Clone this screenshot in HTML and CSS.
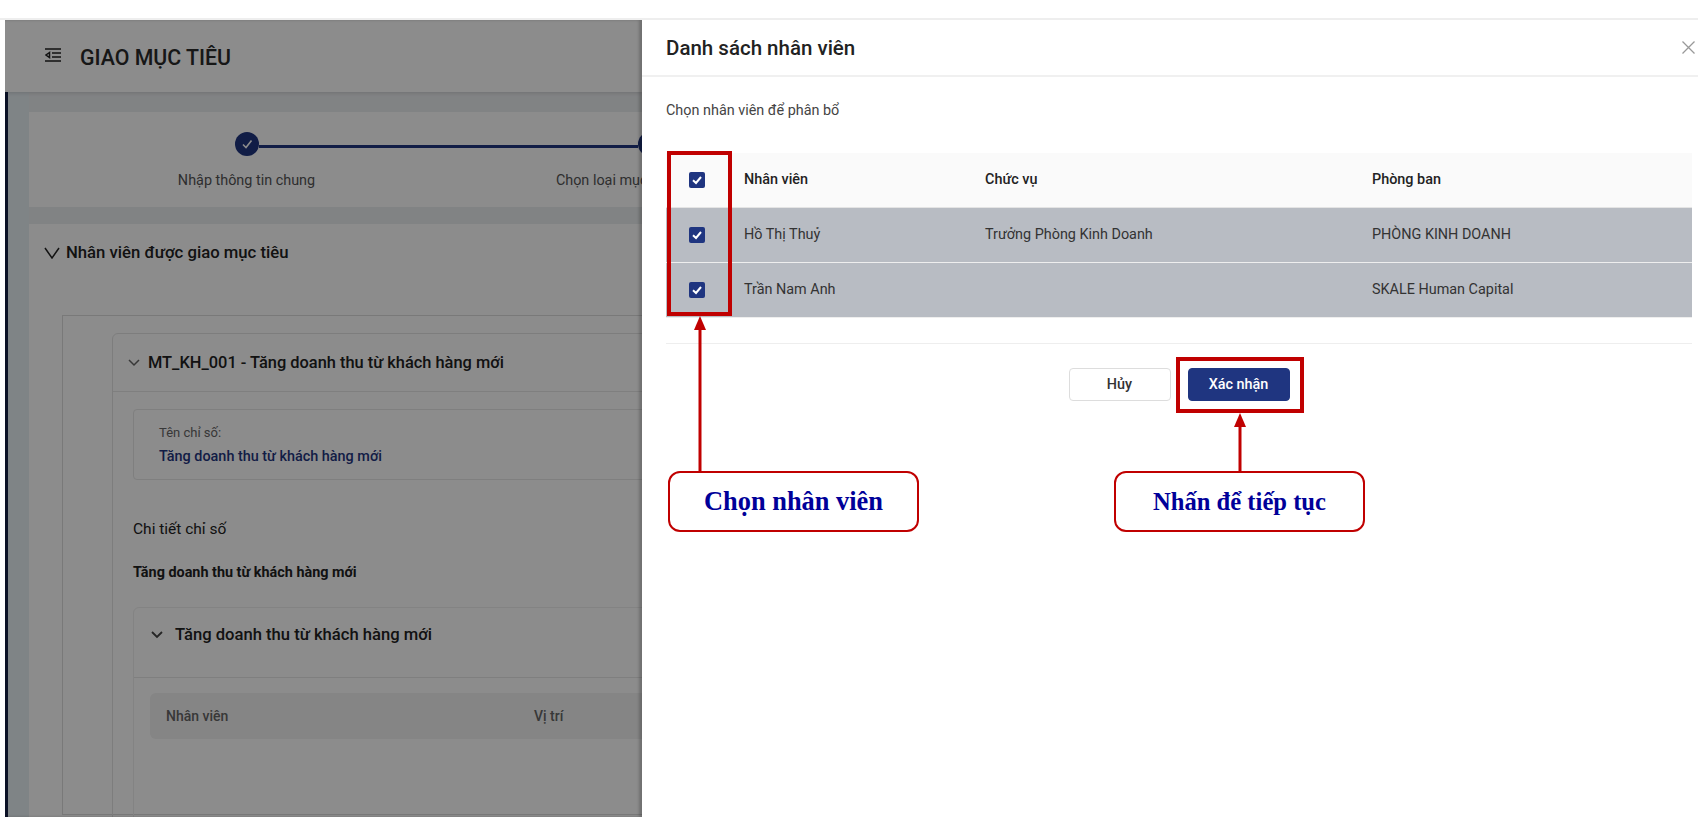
FILE: index.html
```html
<!DOCTYPE html>
<html lang="vi">
<head>
    <meta charset="UTF-8">
    <title>Giao mục tiêu</title>
    <link rel="stylesheet" href="styles.css">
</head>
<body>
    <div class="topbar"></div>
    <div class="screen">
        <div class="page">
            <header class="page-header">
                <svg class="menu-icon" viewBox="0 0 16 14" width="16" height="14">
                    <path d="M0 1h16M7 5h9M7 9h9M0 13h16M4.500 4.500 1 7l3.500 2.500z" fill="none" stroke="#222" stroke-width="1.500"/>
                </svg>
                <h1>GIAO MỤC TIÊU</h1>
            </header>
            <div class="rail">
                <div class="content">
                    <section class="steps">
                        <div class="step-track">
                            <span class="step-dot">
                                <svg viewBox="0 0 12 12" width="12" height="12"><path d="M2 6.500 5 9.500 10.500 2.500" fill="none" stroke="#fff" stroke-width="1.600"/></svg>
                            </span>
                            <span class="step-line"></span>
                            <span class="step-dot"></span>
                        </div>
                        <div class="step-labels">
                            <span>Nhập thông tin chung</span>
                            <span>Chọn loại mục tiêu và chỉ tiêu</span>
                        </div>
                    </section>

                    <section class="assign">
                        <h2 class="assign-title">
                            <svg viewBox="0 0 16 12" width="16" height="12"><path d="M1 1l7 10 7-10" fill="none" stroke="#222" stroke-width="1.500"/></svg>
                            Nhân viên được giao mục tiêu
                        </h2>
                        <div class="assign-box">
                            <div class="goal">
                                <h3 class="goal-head">
                                    <svg viewBox="0 0 12 8" width="12" height="8"><path d="M1 1l5 5 5-5" fill="none" stroke="#666" stroke-width="1.500"/></svg>
                                    MT_KH_001 - Tăng doanh thu từ khách hàng mới
                                </h3>
                                <div class="goal-body">
                                    <div class="metric-name">
                                        <div class="metric-label">Tên chỉ số:</div>
                                        <div class="metric-value">Tăng doanh thu từ khách hàng mới</div>
                                    </div>
                                    <div class="detail-title">Chi tiết chỉ số</div>
                                    <div class="detail-name">Tăng doanh thu từ khách hàng mới</div>
                                    <div class="detail-card">
                                        <h4 class="detail-head">
                                            <svg viewBox="0 0 12 8" width="12" height="8"><path d="M1 1l5 5 5-5" fill="none" stroke="#444" stroke-width="1.800"/></svg>
                                            Tăng doanh thu từ khách hàng mới
                                        </h4>
                                        <div class="detail-table-head">
                                            <span class="col-staff">Nhân viên</span>
                                            <span>Vị trí</span>
                                        </div>
                                    </div>
                                </div>
                            </div>
                        </div>
                    </section>
                </div>
            </div>
        </div>

        <aside class="drawer">
            <div class="drawer-head">
                <h2>Danh sách nhân viên</h2>
                <svg class="close-icon" viewBox="0 0 13 13" width="13" height="13"><path d="M.5.500l12 12M12.500.500l-12 12" fill="none" stroke="#999" stroke-width="1.300"/></svg>
            </div>
            <div class="drawer-body">
                <p class="hint">Chọn nhân viên để phân bổ</p>
                <table class="staff-table">
                    <thead>
                        <tr>
                            <th class="check-cell"><span class="checkbox"><svg viewBox="0 0 16 16" width="16" height="16"><path d="M4 8.300 7 11l5-6" fill="none" stroke="#fff" stroke-width="2"/></svg></span></th>
                            <th class="name-cell">Nhân viên</th>
                            <th class="role-cell">Chức vụ</th>
                            <th>Phòng ban</th>
                        </tr>
                    </thead>
                    <tbody>
                        <tr>
                            <td class="check-cell"><span class="checkbox"><svg viewBox="0 0 16 16" width="16" height="16"><path d="M4 8.300 7 11l5-6" fill="none" stroke="#fff" stroke-width="2"/></svg></span></td>
                            <td>Hồ Thị Thuỷ</td>
                            <td>Trưởng Phòng Kinh Doanh</td>
                            <td>PHÒNG KINH DOANH</td>
                        </tr>
                        <tr>
                            <td class="check-cell"><span class="checkbox"><svg viewBox="0 0 16 16" width="16" height="16"><path d="M4 8.300 7 11l5-6" fill="none" stroke="#fff" stroke-width="2"/></svg></span></td>
                            <td>Trần Nam Anh</td>
                            <td></td>
                            <td>SKALE Human Capital</td>
                        </tr>
                    </tbody>
                </table>
                <div class="drawer-actions">
                    <button class="btn btn-cancel">Hủy</button>
                    <button class="btn btn-ok">Xác nhận</button>
                </div>
            </div>
        </aside>
    </div>

    <!-- annotations drawn on top of the screenshot -->
    <div class="mark mark-check"></div>
    <svg class="arrow arrow-check" viewBox="0 0 14 155" width="14" height="155"><path d="M7 12v143" stroke="#c00000" stroke-width="3"/><path d="M7 0l6 14H1z" fill="#c00000"/></svg>
    <div class="callout callout-check">Chọn nhân viên</div>

    <div class="mark mark-ok"></div>
    <svg class="arrow arrow-ok" viewBox="0 0 14 58" width="14" height="58"><path d="M7 12v46" stroke="#c00000" stroke-width="3"/><path d="M7 0l6 14H1z" fill="#c00000"/></svg>
    <div class="callout callout-ok">Nhấn để tiếp tục</div>
</body>
</html>
```

FILE: styles.css
```css
* {
    box-sizing: border-box;
}

body {
    font-family: Roboto, Arial, sans-serif;
    font-size: 14.4px;
    color: #222;
    background: white;
    height: 817px;
    margin: 0;
    overflow: hidden;
    position: relative;
}

h1, h2, h3, h4, p {
    margin: 0;
}

.topbar {
    height: 20px;
    border-bottom: 2px solid #eee;
}

.screen {
    display: flex;
    height: 797px;
}

/* dimmed page behind the drawer */
.page {
    width: 638px;
    margin-left: 5px;
    position: relative;
    overflow: hidden;
    display: flex;
    flex-direction: column;
}

.page::after {
    content: "";
    position: absolute;
    inset: 0;
    background: rgba(0, 0, 0, 0.45);
    box-shadow: inset -3px 0 3px rgba(0, 0, 0, 0.2);
}

.page-header {
    height: 72px;
    flex: none;
    display: flex;
    align-items: center;
    gap: 19px;
    padding-left: 40px;
    background: white;
    box-shadow: 0 1px 4px rgba(0, 0, 0, 0.15);
    position: relative;
}

.menu-icon {
    margin-top: -3px;
}

.page-header h1 {
    font-size: 21.3px;
    font-weight: 500;
    color: #2a2a2a;
    padding-top: 2px;
}

.rail {
    flex: 1;
    border-left: 3px solid #142046;
    padding-left: 21px;
    background: #e8f0f4;
}

.content {
    width: 1100px;
    height: 100%;
    background: #eceef1;
    padding-top: 20px;
}

.steps {
    height: 95px;
    background: white;
    padding-top: 20px;
}

.step-track {
    display: flex;
    padding-left: 206px;
}

.step-dot {
    width: 24px;
    height: 24px;
    border-radius: 50%;
    background: #1f3580;
    display: flex;
    align-items: center;
    justify-content: center;
    flex: none;
}

.step-line {
    width: 379px;
    height: 3px;
    margin-top: 13px;
    background: #1f3580;
}

.step-labels {
    display: flex;
    margin-top: 16px;
    padding-left: 16px;
    color: #555;
}

.step-labels span {
    width: 403px;
    text-align: center;
}

.assign {
    margin-top: 17px;
    height: 600px;
    background: white;
    padding: 19px 0 0 15px;
}

.assign-title {
    display: flex;
    align-items: center;
    gap: 6px;
    font-size: 16.7px;
    font-weight: 500;
    line-height: 20px;
}

.assign-box {
    margin: 52px 0 0 18px;
    height: 500px;
    border: 1px solid #ddd;
    padding: 17px 0 0 49px;
}

.goal {
    border: 1px solid #e4e4e4;
    border-radius: 6px;
    height: 500px;
}

.goal-head {
    height: 58px;
    display: flex;
    align-items: center;
    gap: 8px;
    padding-left: 15px;
    font-size: 16.4px;
    font-weight: 500;
    border-bottom: 1px solid #e8e8e8;
}

.goal-body {
    padding: 17px 0 0 20px;
}

.metric-name {
    height: 71px;
    border: 1px solid #e8e8e8;
    border-radius: 4px;
    padding: 14px 0 0 25px;
}

.metric-label {
    font-size: 13px;
    line-height: 18px;
    color: #666;
}

.metric-value {
    margin-top: 5px;
    font-weight: 500;
    line-height: 20px;
    color: #1f3580;
}

.detail-title {
    margin-top: 39px;
    line-height: 20px;
    font-size: 15.500px;
}

.detail-name {
    margin-top: 24px;
    line-height: 20px;
    font-weight: 700;
}

.detail-card {
    margin-top: 24px;
    height: 300px;
    border-radius: 6px;
    border: 1px solid #efefef;
}

.detail-head {
    height: 70px;
    display: flex;
    align-items: center;
    gap: 12px;
    padding: 0 0 16px 17px;
    font-size: 16.600px;
    font-weight: 500;
    border-bottom: 1px solid #e8e8e8;
}

.detail-table-head {
    margin: 15px 0 0 16px;
    height: 46px;
    display: flex;
    align-items: center;
    border-radius: 6px;
    background: #f2f2f2;
    color: #666;
    font-weight: 500;
    font-size: 14px;
}

.col-staff {
    width: 384px;
    padding-left: 16px;
}

/* drawer */
.drawer {
    flex: 1;
    background: white;
}

.drawer-head {
    height: 57px;
    display: flex;
    align-items: center;
    justify-content: space-between;
    padding: 0 3px 0 24px;
    border-bottom: 2px solid #f0f0f0;
}

.drawer-head h2 {
    font-size: 20.500px;
    font-weight: 500;
    color: #222;
}

.close-icon {
    flex: none;
}

.drawer-body {
    padding: 24px 6px 0 24px;
}

.hint {
    line-height: 20px;
    color: #444;
}

.staff-table {
    width: 1026px;
    margin-top: 32px;
    border-collapse: collapse;
    table-layout: fixed;
}

.staff-table th,
.staff-table td {
    padding: 0;
    text-align: left;
    vertical-align: middle;
}

.staff-table th {
    height: 54px;
    background: #fafafa;
    font-weight: 500;
    color: #222;
    border-bottom: 1px solid #e4e4e4;
}

.staff-table td {
    height: 55px;
    background: #b8bcc3;
    color: #333;
    border-bottom: 1px solid #eee;
}

.staff-table .check-cell {
    width: 78px;
    padding-left: 23px;
}

.name-cell {
    width: 241px;
}

.role-cell {
    width: 387px;
}

.checkbox {
    display: block;
    width: 16px;
    height: 16px;
    border-radius: 2px;
    background: #1f3580;
}

.checkbox svg {
    display: block;
}

.drawer-actions {
    margin-top: 25px;
    padding-top: 24px;
    border-top: 1px solid #eee;
    display: flex;
    justify-content: center;
    gap: 17px;
}

.btn {
    width: 102px;
    height: 33px;
    border-radius: 4px;
    font-family: inherit;
    font-size: 14.4px;
    font-weight: 500;
    cursor: pointer;
}

.btn-cancel {
    background: white;
    border: 1px solid #ddd;
    color: #333;
}

.btn-ok {
    background: #1f3580;
    border: 1px solid #1f3580;
    color: white;
}

/* annotations */
.mark {
    position: absolute;
    border: 4px solid #c00000;
}

.mark-check {
    left: 667px;
    top: 151px;
    width: 65px;
    height: 165px;
}

.mark-ok {
    left: 1176px;
    top: 357px;
    width: 128px;
    height: 56px;
}

.arrow {
    position: absolute;
}

.arrow-check {
    left: 693px;
    top: 316px;
}

.arrow-ok {
    left: 1233px;
    top: 413px;
}

.callout {
    position: absolute;
    top: 471px;
    width: 251px;
    height: 61px;
    border: 2px solid #c00000;
    border-radius: 12px;
    background: white;
    display: flex;
    align-items: center;
    justify-content: center;
    font-family: "Liberation Serif", "Times New Roman", serif;
    font-weight: 700;
    color: #000099;
}

.callout-check {
    left: 668px;
    font-size: 26.400px;
}

.callout-ok {
    left: 1114px;
    font-size: 24.600px;
}
```
